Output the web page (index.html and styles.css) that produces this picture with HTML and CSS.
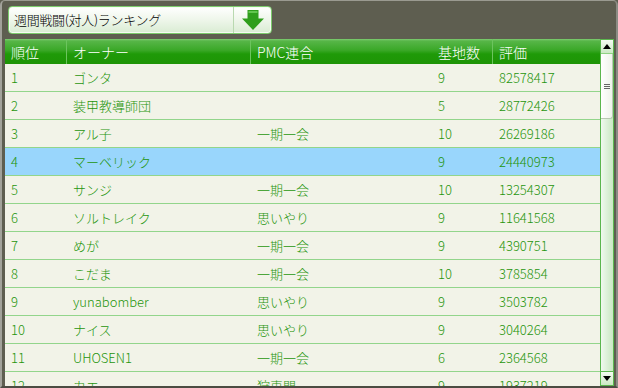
FILE: index.html
```html
<!DOCTYPE html>
<html lang="ja">
<head>
<meta charset="utf-8">
<link rel="stylesheet" href="styles.css">
</head>
<body>
<div class="window">
  <div class="toolbar">
    <div class="select">
      <span class="select-label">週間戦闘(対人)ランキング</span>
      <span class="select-btn">
        <svg width="24" height="22" viewBox="0 0 24 22">
          <path d="M6.5 1 H17.5 V9.5 H23 L12 21 L1 9.5 H6.5 Z" fill="#2f9e1c"/>
          <path d="M7.5 2 H16.5 V4 H7.5 Z" fill="#62c64f"/>
        </svg>
      </span>
    </div>
  </div>
  <div class="panel">
    <div class="table">
      <div class="row head">
        <div class="c c1 sep">順位</div>
        <div class="c c2 sep">オーナー</div>
        <div class="c c3">PMC連合</div>
        <div class="c c4 sep">基地数</div>
        <div class="c c5">評価</div>
      </div>
      <div class="row"><div class="c c1">1</div><div class="c c2">ゴンタ</div><div class="c c3"></div><div class="c c4">9</div><div class="c c5">82578417</div></div>
      <div class="row"><div class="c c1">2</div><div class="c c2">装甲教導師団</div><div class="c c3"></div><div class="c c4">5</div><div class="c c5">28772426</div></div>
      <div class="row"><div class="c c1">3</div><div class="c c2">アル子</div><div class="c c3">一期一会</div><div class="c c4">10</div><div class="c c5">26269186</div></div>
      <div class="row sel"><div class="c c1">4</div><div class="c c2">マーベリック</div><div class="c c3"></div><div class="c c4">9</div><div class="c c5">24440973</div></div>
      <div class="row"><div class="c c1">5</div><div class="c c2">サンジ</div><div class="c c3">一期一会</div><div class="c c4">10</div><div class="c c5">13254307</div></div>
      <div class="row"><div class="c c1">6</div><div class="c c2">ソルトレイク</div><div class="c c3">思いやり</div><div class="c c4">9</div><div class="c c5">11641568</div></div>
      <div class="row"><div class="c c1">7</div><div class="c c2">めが</div><div class="c c3">一期一会</div><div class="c c4">9</div><div class="c c5">4390751</div></div>
      <div class="row"><div class="c c1">8</div><div class="c c2">こだま</div><div class="c c3">一期一会</div><div class="c c4">10</div><div class="c c5">3785854</div></div>
      <div class="row"><div class="c c1">9</div><div class="c c2">yunabomber</div><div class="c c3">思いやり</div><div class="c c4">9</div><div class="c c5">3503782</div></div>
      <div class="row"><div class="c c1">10</div><div class="c c2">ナイス</div><div class="c c3">思いやり</div><div class="c c4">9</div><div class="c c5">3040264</div></div>
      <div class="row"><div class="c c1">11</div><div class="c c2">UHOSEN1</div><div class="c c3">一期一会</div><div class="c c4">6</div><div class="c c5">2364568</div></div>
      <div class="row"><div class="c c1">12</div><div class="c c2">カエ</div><div class="c c3">狩車門</div><div class="c c4">9</div><div class="c c5">1937219</div></div>
    </div>
    <div class="scrollbar">
      <div class="sb-btn"><span class="tri up"></span></div>
      <div class="sb-track">
        <div class="sb-thumb"><span class="grip"></span></div>
      </div>
      <div class="sb-btn"><span class="tri down"></span></div>
    </div>
  </div>
</div>
</body>
</html>
```

FILE: styles.css
```css
* { box-sizing: border-box; }
html, body {
  margin: 0;
  padding: 0;
  width: 618px;
  height: 388px;
  overflow: hidden;
  background: #5e5e50;
}
.window {
  width: 618px;
  height: 388px;
  background: #5e5e50;
  border-top: 1px solid #9a9a90;
  border-left: 2px solid #a2a29a;
  border-right: 2px solid #8c8c84;
  border-bottom: 2px solid #4c4c42;
  border-radius: 5px 5px 0 0;
  display: flex;
  flex-direction: column;
  font-family: "Noto Sans CJK JP", "Noto Sans", sans-serif;
  font-weight: 300;
}
.toolbar {
  height: 38px;
  padding: 5px 0 0 6px;
}
.select {
  width: 264px;
  height: 28px;
  border: 1px solid #7ccb6c;
  border-radius: 4px;
  background: linear-gradient(#ffffff, #eef6ea 50%, #d9ecd3);
  display: flex;
  align-items: stretch;
  box-shadow: inset 0 0 0 1px #f4fbf2;
}
.select-label {
  flex: 1;
  padding-left: 5px;
  font-size: 13px;
  line-height: 26px;
  color: #000;
  letter-spacing: -0.3px;
}
.select-btn {
  width: 38px;
  border-left: 1px solid #b9d9b0;
  display: flex;
  align-items: center;
  justify-content: center;
}
.panel {
  flex: 1;
  display: flex;
  margin-left: 3px;
  overflow: hidden;
}
.table {
  width: 595px;
  background: #f2f3e8;
  overflow: hidden;
}
.row {
  display: flex;
  height: 28px;
  border-bottom: 1px solid #93d58b;
  color: #1f950c;
  font-size: 13px;
}
.row.sel { background: #99d6fc; }
.row.head {
  height: 25px;
  border-bottom: none;
  color: #fff;
  font-size: 14px;
  background: linear-gradient(#7fcc72 0, #57b648 8%, #3aa827 45%, #1f9a08 60%, #1e9406 100%);
}
.c {
  display: flex;
  align-items: center;
  padding-left: 6px;
  white-space: nowrap;
}
.head .sep { border-right: 1px solid #6cc45e; }
.c1 { width: 62px; }
.c2 { width: 184px; }
.c3 { width: 181px; }
.c4 { width: 61px; }
.c5 { width: 107px; }
.scrollbar {
  width: 14px;
  display: flex;
  flex-direction: column;
  border: 1px solid #5bb64e;
  background: linear-gradient(90deg, #f0f9ee, #c9e8c2);
}
.sb-btn {
  height: 14px;
  display: flex;
  align-items: center;
  justify-content: center;
  background: linear-gradient(#f4fbf2, #cbe9c4);
  border-bottom: 1px solid #8fd283;
}
.sb-btn:last-child {
  border-bottom: none;
  border-top: 1px solid #5bb64e;
}
.tri { width: 0; height: 0; border-left: 4px solid transparent; border-right: 4px solid transparent; }
.tri.up { border-bottom: 5px solid #000; }
.tri.down { border-top: 5px solid #000; }
.sb-track { flex: 1; }
.sb-thumb {
  height: 65px;
  background: linear-gradient(90deg, #ffffff, #eef3ea);
  border: 1px solid #b8c8b2;
  border-left: none;
  border-top: none;
  border-radius: 0 0 3px 0;
  display: flex;
  align-items: center;
  justify-content: center;
}
.grip {
  width: 6px;
  height: 5px;
  border-top: 1px solid #666;
  border-bottom: 1px solid #666;
  position: relative;
}
.grip::after {
  content: "";
  position: absolute;
  left: 0;
  right: 0;
  top: 1px;
  border-top: 1px solid #666;
}
```
